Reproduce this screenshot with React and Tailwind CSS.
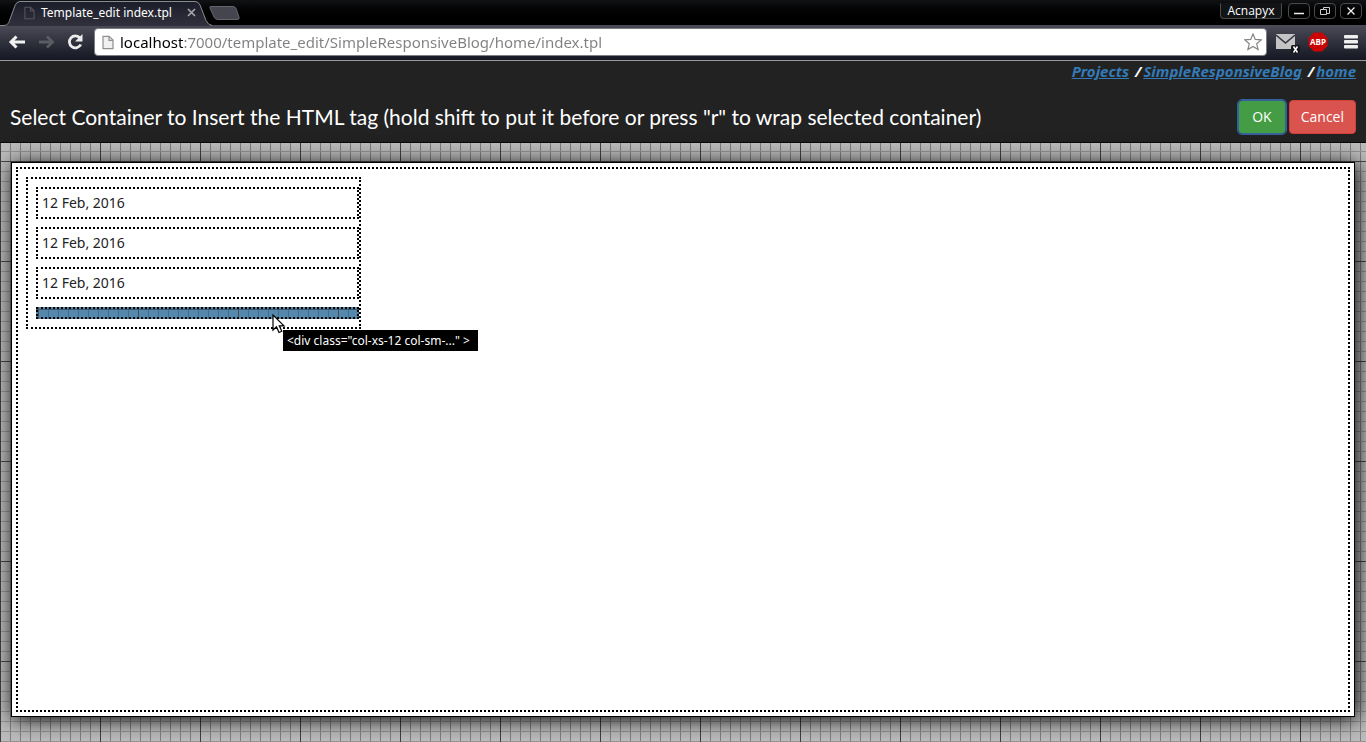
const pageGrid =
  'bg-[#bcbcbc] bg-[image:linear-gradient(#484848_1px,transparent_1px),linear-gradient(90deg,#404040_1px,transparent_1px),linear-gradient(#949494_1px,transparent_1px),linear-gradient(90deg,#808080_1px,transparent_1px)] bg-[size:100px_100px,100px_100px,10px_10px,10px_10px]';

const linkClass = 'text-[#337ab7] underline';

function PageIcon({ className, fill, stroke }) {
  return (
    <svg viewBox="0 0 12 14" className={className} aria-hidden="true">
      <path d="M1 .8h6.2L11 4.6v8.6H1z" fill={fill} stroke={stroke} strokeWidth="1.2" />
      <path d="M7 .8v4h4" fill="none" stroke={stroke} strokeWidth="1.2" />
    </svg>
  );
}

function TabStrip() {
  return (
    <div className="relative flex h-[25px] items-start bg-gradient-to-b from-[#101214] to-black">
      <svg width="246" height="26" viewBox="0 0 246 26" className="absolute left-0 top-0 z-10" aria-hidden="true">
        <defs>
          <linearGradient id="tab" x1="0" y1="0" x2="0" y2="1">
            <stop offset="0" stopColor="#1c1d2a" />
            <stop offset="1" stopColor="#30313c" />
          </linearGradient>
        </defs>
        <path d="M4 26C8 25 8.500 23 9.500 20.500L15 5.500Q16.500 1.500 20 1.500H195Q198.500 1.500 200 5L206 20.500Q208 25.500 212 26z" fill="url(#tab)" />
        <path d="M0 25.500H4C8 25 8.500 23 9.500 20.500L15 5.500Q16.500 1.500 20 1.500H195Q198.500 1.500 200 5L206 20.500Q208 25 212 25.500" fill="none" stroke="#8b8c93" />
        <path d="M211 6.500H233Q235 6.500 236 8.500L239 17Q240 19.500 237 19.500H218Q215 19.500 214 17L210 8Q209.500 6.500 211 6.500z" fill="#44454f" stroke="#66676d" />
      </svg>
      <div className="relative z-10 flex h-[25px] w-52 items-center pl-6 pr-3">
        <PageIcon className="h-[14px] w-[11px] shrink-0" fill="none" stroke="#54555a" />
        <span className="ml-[6px] flex-1 whitespace-nowrap font-['Noto_Sans',sans-serif] text-[12px] leading-4 text-white">Template_edit index.tpl</span>
        <button aria-label="Close tab" className="flex">
          <svg width="9" height="9" viewBox="0 0 9 9" aria-hidden="true">
            <path d="M1 1l7 7M8 1L1 8" stroke="#a5a6aa" strokeWidth="1.700" />
          </svg>
        </button>
      </div>
      <div className="ml-auto flex gap-1 pr-1 pt-[3px]">
        <button className="mr-[2px] h-4 w-[62px] rounded-b border border-[#4a4b4d] border-t-transparent bg-[#111315] font-['Open_Sans',sans-serif] text-[12px] leading-[14px] text-white">Acnapyx</button>
        <button aria-label="Minimize" className="h-4 w-[22px] rounded-sm border border-[#494b4d]">
          <svg width="20" height="14" viewBox="0 0 20 14" aria-hidden="true"><path d="M5 9.500h10" stroke="#eee" strokeWidth="1.500" /></svg>
        </button>
        <button aria-label="Restore" className="h-4 w-[22px] rounded-sm border border-[#494b4d]">
          <svg width="20" height="14" viewBox="0 0 20 14" fill="none" stroke="#ccc" aria-hidden="true"><path d="M8.500 5v-1.500h6v6H12M5.500 5.500h6v5h-6z" /></svg>
        </button>
        <button aria-label="Close window" className="h-4 w-[22px] rounded-sm border border-[#494b4d]">
          <svg width="20" height="14" viewBox="0 0 20 14" aria-hidden="true"><path d="M6.500 3.500l7 7M13.500 3.500l-7 7" stroke="#eee" strokeWidth="1.300" /></svg>
        </button>
      </div>
    </div>
  );
}

function Toolbar() {
  return (
    <div className="flex h-9 items-center border-b border-[#9a9b9d] bg-gradient-to-b from-[#4b4c57] to-[#151722] pb-px pr-2">
      <button aria-label="Back" className="ml-2">
        <svg width="18" height="18" viewBox="0 0 18 18" fill="none" stroke="#f2f2f2" strokeWidth="3" aria-hidden="true"><path d="M17 9H4M8.500 3.500L3 9l5.500 5.500" /></svg>
      </button>
      <button aria-label="Forward" className="ml-3">
        <svg width="18" height="18" viewBox="0 0 18 18" fill="none" stroke="#5b5c63" strokeWidth="2.800" aria-hidden="true"><path d="M1 9h13M9 3.500L14.500 9 9 14.500" /></svg>
      </button>
      <button aria-label="Reload" className="ml-[10px]">
        <svg width="18" height="18" viewBox="0 0 18 18" aria-hidden="true">
          <path d="M14 5A6 6 0 1 0 14.800 11.500" fill="none" stroke="#ececec" strokeWidth="2.800" />
          <path d="M16.500 1v7.500H9z" fill="#ececec" />
        </svg>
      </button>
      <div className="ml-[10px] flex h-[28px] flex-1 items-center rounded-sm border border-[#7c7d82] bg-white pl-[7px] pr-1">
        <PageIcon className="h-[15px] w-[12px] shrink-0" fill="#f0f0f0" stroke="#8f8f8f" />
        <input
          aria-label="Address"
          className="ml-[6px] block h-6 min-w-0 flex-1 bg-[linear-gradient(90deg,#000_64px,#808080_64px)] bg-clip-text pb-px font-['Noto_Sans',sans-serif] text-[15px] leading-5 text-transparent caret-black outline-none"
          defaultValue="localhost:7000/template_edit/SimpleResponsiveBlog/home/index.tpl"
        />
        <svg width="18" height="18" viewBox="0 0 18 18" aria-hidden="true"><path d="M9 1l2.300 5.400 5.900.5-4.500 3.900 1.400 5.800L9 13.500l-5.100 3.100 1.400-5.800L.8 6.900l5.900-.5z" fill="#fff" stroke="#858585" strokeWidth="1.200" /></svg>
      </div>
      <button aria-label="Mail" className="ml-[9px]">
        <svg width="24" height="22" viewBox="0 0 24 22" aria-hidden="true">
          <path d="M0 3h19v15H0z" fill="#c4c4c4" />
          <path d="M0 4l9.500 8L19 4" fill="none" stroke="#343540" strokeWidth="1.600" />
          <rect x="15" y="14" width="9" height="8" rx="1.500" fill="#16171c" />
          <path d="M17.500 15.500l4 6M21.500 15.500l-4 6" stroke="#fff" strokeWidth="1.500" />
        </svg>
      </button>
      <button aria-label="Adblock Plus" className="ml-2">
        <svg width="20" height="20" viewBox="0 0 20 20" aria-hidden="true">
          <path d="M6 .5h8L19.500 6v8L14 19.500H6L.5 14V6z" fill="#cb0505" />
          <text x="10" y="13" textAnchor="middle" fill="#fff" fontFamily="Open Sans, sans-serif" fontSize="8" fontWeight="700">ABP</text>
        </svg>
      </button>
      <button aria-label="Menu" className="ml-4">
        <svg width="14" height="16" viewBox="0 0 14 16" fill="#efefef" aria-hidden="true"><rect y="1" width="14" height="3.500" rx="1" /><rect y="6" width="14" height="3.500" rx="1" /><rect y="11" width="14" height="3.500" rx="1" /></svg>
      </button>
    </div>
  );
}

function EditorHeader() {
  return (
    <header className="border-b border-[#080808] bg-[#222] px-[10px] pb-2 font-['Open_Sans',sans-serif]">
      <nav aria-label="Breadcrumb" className="flex h-5 items-center justify-end gap-[2px] font-['Noto_Sans',sans-serif] text-[15px] font-bold italic leading-5 text-white">
        <a href="#projects" className={linkClass}>Projects</a>
        <span className="ml-1">/</span>
        <a href="#blog" className={linkClass}>SimpleResponsiveBlog</a>
        <span className="ml-1">/</span>
        <a href="#home" className={linkClass}>home</a>
      </nav>
      <div className="mt-[19px] flex items-center justify-between">
        <h1 className="whitespace-nowrap font-['Lato','Open_Sans',sans-serif] text-[21px] leading-7 text-white">Select Container to Insert the HTML tag (hold shift to put it before or press "r" to wrap selected container)</h1>
        <div className="flex gap-[3px] text-[14px] leading-5 text-white">
          <button className="rounded border border-[#34609c] bg-[#449d44] px-[13px] py-[6px] outline outline-1 outline-[#34609c]">OK</button>
          <button className="rounded border border-[#d43f3a] bg-[#d9534f] px-[11px] py-[6px]">Cancel</button>
        </div>
      </div>
    </header>
  );
}

export default function App() {
  const dates = ['12 Feb, 2016', '12 Feb, 2016', '12 Feb, 2016'];
  return (
    <div className="flex min-h-screen flex-col overflow-hidden">
      <TabStrip />
      <Toolbar />
      <div className={`flex flex-1 flex-col ${pageGrid}`}>
        <EditorHeader />
        <main className="mx-[11px] mb-[25px] mt-[19px] flex flex-1 flex-col border border-black bg-white p-1 font-['Noto_Sans',sans-serif] shadow-[2px_2px_20px_0_#000]">
          <div className="flex-1 border-2 border-dotted border-black p-2">
            <div className="w-[335px] border-2 border-dotted border-black pb-2 pl-2">
              {dates.map((date, i) => (
                <div key={i} className="mt-2 h-8 border-2 border-dotted border-black px-1 text-[14px] leading-7 text-[#222]">{date}</div>
              ))}
              <div className="relative mt-2 h-3 border-2 border-dotted border-black bg-[#5588ad] bg-[image:linear-gradient(#405768_1px,transparent_1px),linear-gradient(90deg,#4b4b4b_1px,transparent_1px),linear-gradient(90deg,#446c8a_1px,transparent_1px)] bg-[size:100px_100px,100px_100px,10px_10px]">
                <svg width="14" height="20" viewBox="0 0 14 20" className="absolute left-[234px] top-[5px] z-10" aria-hidden="true">
                  <path d="M1 1v15l3.500-3.300L7 18.500l2.800-1.200-2.500-5.500H12z" fill="#fff" stroke="#000" strokeWidth="1.200" />
                </svg>
                <div role="tooltip" className="absolute left-[245px] top-[21px] z-10 h-[21px] whitespace-nowrap bg-black pl-1 pr-2 text-[12px] leading-[21px] text-white">{'<div class="col-xs-12 col-sm-..." >'}</div>
              </div>
            </div>
          </div>
        </main>
      </div>
    </div>
  );
}
